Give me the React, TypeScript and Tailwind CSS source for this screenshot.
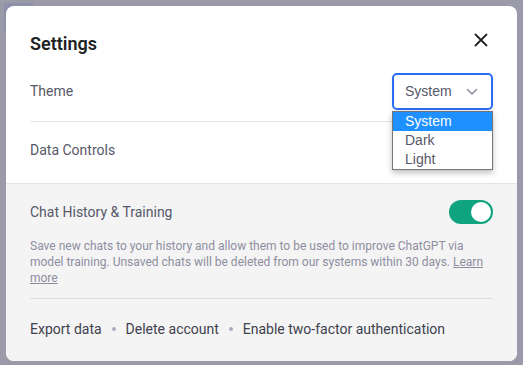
import { useState } from "react";

function CloseIcon() {
  return (
    <svg width="14" height="14" viewBox="0 0 14 14" fill="none">
      <path d="M1.5 1.5L12.5 12.5M12.5 1.5L1.5 12.5" stroke="#202123" strokeWidth="1.8" strokeLinecap="round" />
    </svg>
  );
}

function Chevron() {
  return (
    <svg width="12" height="8" viewBox="0 0 12 8" fill="none">
      <path d="M1.5 1.5L6 6L10.5 1.5" stroke="#8e8ea0" strokeWidth="1.5" strokeLinecap="round" strokeLinejoin="round" />
    </svg>
  );
}

export default function App() {
  const [theme, setTheme] = useState("System");
  const [history, setHistory] = useState(true);
  const options = ["System", "Dark", "Light"];

  return (
    <div className="relative w-[523px] h-[365px] bg-[#9b9aa9] p-[6px] overflow-hidden font-['Roboto',sans-serif]">
      {/* content behind the overlay */}
      <div className="absolute left-[4px] top-[3px] w-[29px] h-[29px] bg-[#8f90a9]" />

      <div className="relative w-[511px] h-[355px] bg-white rounded-lg flex flex-col">
        {/* Header */}
        <div className="flex items-center justify-between px-6 pt-6">
          <h2 className="text-[18px] leading-7 font-semibold text-[#202123]">Settings</h2>
          <button className="w-5 h-5 flex items-center justify-center -mt-2 mr-[2px]">
            <CloseIcon />
          </button>
        </div>

        {/* General */}
        <div className="px-6 pt-1">
          <div className="h-[60px] flex items-center justify-between border-b border-[#e5e5e5]">
            <span className="text-[14px] text-[#565869]">Theme</span>
            <div className="relative">
              <div className="w-[101px] h-[37px] border-2 border-[#2b6cf6] rounded-[5px] bg-white flex items-center justify-between pl-[11px] pr-[13px] shadow-[0_2px_4px_rgba(0,0,0,0.08)]">
                <span className="text-[14px] text-[#565869] font-['Liberation_Sans',sans-serif]">{theme}</span>
                <Chevron />
              </div>
              <ul className="absolute left-0 top-full mt-px w-[101px] bg-white border border-[#767676] shadow-[0_3px_6px_rgba(0,0,0,0.25)] z-10 font-['Liberation_Sans',sans-serif] text-[14px] leading-[19px] py-0">
                {options.map((o) => (
                  <li
                    key={o}
                    onClick={() => setTheme(o)}
                    className={
                      o === theme
                        ? "pl-3 bg-[#1e90ff] text-white"
                        : "pl-3 text-[#565869]"
                    }
                  >
                    {o}
                  </li>
                ))}
              </ul>
            </div>
          </div>
          <div className="h-[61px] pb-[5px] flex items-center">
            <span className="text-[14px] text-[#565869]">Data Controls</span>
          </div>
        </div>

        {/* Data section */}
        <div className="flex-1 border-t border-[#e5e5e5] bg-[#f4f4f4] rounded-b-lg px-6 pt-4">
          <div className="h-6 flex items-center justify-between">
            <span className="text-[14px] text-[#565869]">Chat History &amp; Training</span>
            <button
              onClick={() => setHistory(!history)}
              className={
                history
                  ? "w-[44px] h-[24px] rounded-full bg-[#10a37f] flex items-center justify-end px-[2px]"
                  : "w-[44px] h-[24px] rounded-full bg-[#d1d5db] flex items-center justify-start px-[2px]"
              }
            >
              <span className="w-5 h-5 rounded-full bg-white" />
            </button>
          </div>
          <p className="mt-[14px] text-[12px] leading-4 text-[#8e8ea0]">
            Save new chats to your history and allow them to be used to improve ChatGPT via model training. Unsaved chats will be deleted from our systems within 30 days.{" "}
            <a className="underline">Learn more</a>
          </p>
          <div className="mt-3 border-t border-[#dcdcdc]" />
          <div className="pt-5 flex items-center gap-[10px] text-[14px] leading-5 text-[#40414f]">
            <span>Export data</span>
            <span className="w-1 h-1 rounded-full bg-[#acacbe]" />
            <span>Delete account</span>
            <span className="w-1 h-1 rounded-full bg-[#acacbe]" />
            <span>Enable two-factor authentication</span>
          </div>
        </div>
      </div>
    </div>
  );
}
